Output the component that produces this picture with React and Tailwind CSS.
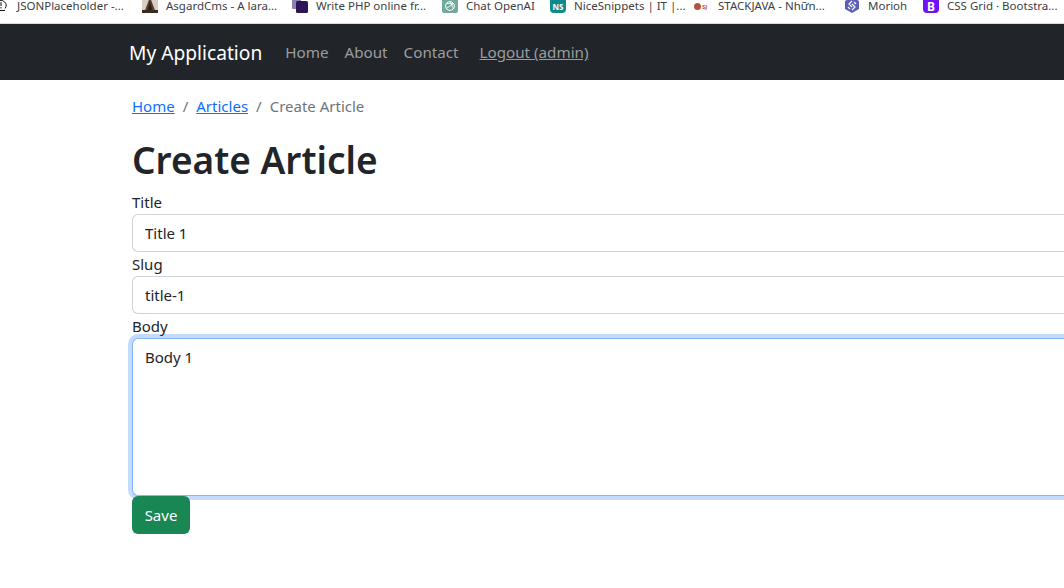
import React from 'react'

function Bookmark({ icon, label, className }) {
  return (
    <div className={`flex items-start shrink-0 ${className}`}>
      <span className="flex items-end justify-center w-4 h-[13px] overflow-hidden shrink-0">{icon}</span>
      <span className="ml-2 whitespace-nowrap text-[11.5px] text-[#3c4043] leading-none">{label}</span>
    </div>
  )
}

function Field({ label, value }) {
  return (
    <div>
      <label className="block h-6 leading-6">{label}</label>
      <div className="h-[38px] border border-[#ced4da] rounded-l-md border-r-0 px-3 leading-[36px] bg-white">{value}</div>
    </div>
  )
}

const JsonIcon = (
  <svg className="shrink-0" width="16" height="16" viewBox="0 0 16 16" fill="none" stroke="#111" strokeWidth="1">
    <path d="M3.5 13.5H12M4 11.5a5 5 0 1 1 8 0" />
    <path d="M8 5v4M8 10v1.5" />
  </svg>
)

const AsgardIcon = (
  <svg className="shrink-0" width="16" height="16" viewBox="0 0 16 16">
    <rect width="16" height="16" fill="#d8cfc4" />
    <polygon points="8,0 14,16 2,16" fill="#5a3f2e" />
    <polygon points="8,4 11,16 5,16" fill="#2b1f1a" />
    <rect y="13" width="16" height="3" fill="#3b2a20" />
  </svg>
)

const PhpIcon = (
  <svg className="shrink-0" width="16" height="16" viewBox="0 0 16 16">
    <rect x="0" y="1" width="9" height="11" rx="1" fill="#8d7fb0" />
    <rect x="4" y="4" width="12" height="12" rx="1.5" fill="#2d1657" />
  </svg>
)

const GptIcon = (
  <svg className="shrink-0" width="16" height="16" viewBox="0 0 16 16" fill="none">
    <rect width="16" height="16" rx="2" fill="#74aa9c" />
    <circle cx="8" cy="9" r="4.4" stroke="#fff" strokeWidth="1" />
    <path d="M8 4.6 11.5 12M4.2 11.5 12 6.5M4 6.5h7" stroke="#fff" strokeWidth="0.8" />
  </svg>
)

const NsIcon = (
  <span className="w-4 h-[13px] bg-[#0f8a8a] rounded-b-sm text-white text-[8px] font-bold text-center leading-[13px]">NS</span>
)

const SjIcon = (
  <span className="flex items-center w-4 h-[13px] gap-px">
    <span className="w-[7px] h-[7px] rounded-full bg-[#b5523f] shrink-0" />
    <span className="text-[6px] font-bold leading-none text-[#b5523f]">SJ</span>
  </span>
)

const MoriohIcon = (
  <svg className="shrink-0" width="16" height="16" viewBox="0 0 16 16" fill="none">
    <polygon points="8,0 15,4 15,12 8,16 1,12 1,4" fill="#5b5fb5" />
    <path d="M8 4 5 7l3 3M8 13l3-3-3-3M4 10l2 2M12 7l-2-2" stroke="#fff" strokeWidth="1.2" />
  </svg>
)

const BootstrapIcon = (
  <span className="w-4 h-[13px] bg-[#7011f6] rounded-b-sm text-white text-[12px] font-bold text-center leading-[13px]">B</span>
)

export default function App() {
  return (
    <div className="w-[1064px] h-[588px] overflow-hidden bg-white text-[#212529] text-[15px] font-['Noto_Sans',sans-serif]">
      {/* browser bookmarks bar, cut off at the top of the shot */}
      <div className="h-[24px] flex bg-white border-b border-[#d9d9d9]">
        <Bookmark className="-ml-[7px] w-[149px]" label="JSONPlaceholder -..." icon={JsonIcon} />
        <Bookmark className="w-[150px]" label="AsgardCms - A lara..." icon={AsgardIcon} />
        <Bookmark className="w-[150px]" label="Write PHP online fr..." icon={PhpIcon} />
        <Bookmark className="w-[108px]" label="Chat OpenAI" icon={GptIcon} />
        <Bookmark className="w-[144px]" label="NiceSnippets | IT |..." icon={NsIcon} />
        <Bookmark className="w-[150px]" label="STACKJAVA - Nhữn..." icon={SjIcon} />
        <Bookmark className="w-[79px]" label="Morioh" icon={MoriohIcon} />
        <Bookmark className="w-[117px]" label="CSS Grid · Bootstra..." icon={BootstrapIcon} />
      </div>

      {/* navbar */}
      <nav className="h-[56px] bg-[#212529] flex items-center pl-[129px] pt-[1px] text-[15.2px] text-[#9a9da0]">
        <span className="text-white text-[19.2px] mr-[23px] mt-[2px]">My Application</span>
        <span className="mr-4">Home</span>
        <span className="mr-4">About</span>
        <span className="mr-[21px]">Contact</span>
        <span className="underline">Logout (admin)</span>
      </nav>

      <main className="pl-[132px]">
        <div className="flex items-center h-6 mt-[14px] gap-2">
          <a className="text-[#0d6efd] underline">Home</a>
          <span className="text-[#6c757d]">/</span>
          <a className="text-[#0d6efd] underline">Articles</a>
          <span className="text-[#6c757d]">/</span>
          <span className="text-[#6c757d]">Create Article</span>
        </div>
        <h1 className="text-[37px] leading-[48px] font-semibold mt-[18px] mb-[6px]">Create Article</h1>
        <Field label="Title" value="Title 1" />
        <Field label="Slug" value="title-1" />
        <div>
          <label className="block h-6 leading-6">Body</label>
          <div className="h-[158px] border border-[#86b7fe] border-r-0 rounded-l-md px-3 pt-[7px] ring-4 ring-[#c2dbfe] bg-white">Body 1</div>
        </div>
        <button className="block h-[38px] w-[58px] bg-[#198754] text-white rounded-md">Save</button>
      </main>
    </div>
  )
}
